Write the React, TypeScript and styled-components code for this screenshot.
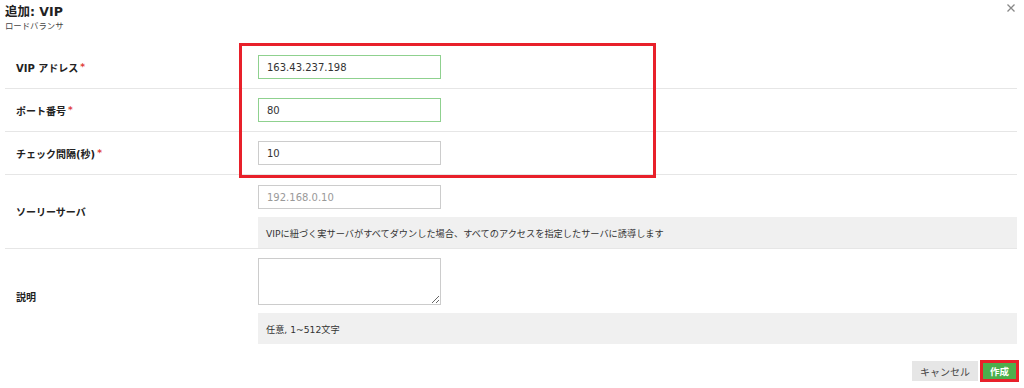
import React from "react";
import styled, { createGlobalStyle } from "styled-components";

const Global = createGlobalStyle`
  html, body { margin: 0; padding: 0; background: #fff; }
  body {
    font-family: "DejaVu Sans", "Noto Sans CJK JP", sans-serif;
    color: #333;
    width: 1024px;
    height: 388px;
    overflow: hidden;
  }
`;

const Dialog = styled.div`
  position: relative;
  width: 1024px;
  height: 388px;
  box-sizing: border-box;
  padding: 0 7px 0 5px;
`;

const Header = styled.div`
  display: flex;
  flex-direction: column;
  padding-top: 4px;
  height: 46px;
  box-sizing: border-box;
`;

const Title = styled.div`
  font-size: 12.5px;
  font-weight: bold;
  line-height: 16px;
  color: #222;
`;

const Subtitle = styled.div`
  font-size: 8.4px;
  line-height: 12px;
  color: #444;
`;

const Close = styled.button`
  position: absolute;
  top: 3px;
  right: 8px;
  width: 10px;
  height: 10px;
  padding: 0;
  border: 0;
  background: none;
  display: flex;
  align-items: center;
  justify-content: center;
`;

const Form = styled.div`
  display: flex;
  flex-direction: column;
`;

const Row = styled.div<{ $last?: boolean }>`
  display: grid;
  grid-template-columns: 253px 1fr;
  align-items: center;
  border-bottom: ${(p) => (p.$last ? "0" : "1px solid #e6e6e6")};
`;

const Label = styled.div`
  padding-left: 11px;
  font-size: 10px;
  font-weight: bold;
  color: #222;
`;

const Req = styled.span`
  color: #e0403a;
  font-size: 9px;
  margin-left: 2px;
  vertical-align: 2px;
`;

const Field = styled.div<{ $top?: number; $bottom?: number }>`
  display: flex;
  flex-direction: column;
  gap: 8px;
  padding-top: ${(p) => p.$top ?? 9}px;
  padding-bottom: ${(p) => p.$bottom ?? 9}px;
`;

const TextInput = styled.input<{ $valid?: boolean }>`
  width: 183px;
  height: 24px;
  box-sizing: border-box;
  border: 1px solid ${(p) => (p.$valid ? "#8fd18f" : "#cccccc")};
  padding: 0 8px;
  font-family: "DejaVu Sans", "Noto Sans CJK JP", sans-serif;
  font-size: 10px;
  color: #333;
  outline: none;
  background: #fff;
  &::placeholder { color: #999; }
`;

const TextArea = styled.textarea`
  width: 183px;
  height: 47px;
  box-sizing: border-box;
  border: 1px solid #cccccc;
  padding: 4px 8px;
  font-family: "DejaVu Sans", "Noto Sans CJK JP", sans-serif;
  font-size: 10px;
  outline: none;
  display: block;
`;

const Help = styled.div`
  background: #f0f0f0;
  height: 31px;
  display: flex;
  align-items: center;
  padding-left: 8px;
  font-size: 9.2px;
  color: #333;
`;

const Footer = styled.div`
  display: flex;
  justify-content: flex-end;
  align-items: center;
  gap: 2px;
  margin-top: 16px;
  margin-right: -2px;
`;

const Button = styled.button<{ $primary?: boolean }>`
  height: ${(p) => (p.$primary ? "16px" : "20px")};
  padding: 0 ${(p) => (p.$primary ? "7px" : "8px")};
  border: 0;
  font-family: "DejaVu Sans", "Noto Sans CJK JP", sans-serif;
  font-size: ${(p) => (p.$primary ? "9.5px" : "10px")};
  font-weight: ${(p) => (p.$primary ? "bold" : "normal")};
  background: ${(p) => (p.$primary ? "#4cae4c" : "#e6e6e6")};
  color: ${(p) => (p.$primary ? "#fff" : "#444")};
  display: flex;
  align-items: center;
`;

const Highlight = styled.div`
  border: 3px solid #e8202a;
  box-sizing: border-box;
`;

const ButtonMark = styled(Highlight)`
  display: flex;
`;

const FieldMark = styled(Highlight)`
  position: absolute;
  left: 239px;
  top: 43px;
  width: 417px;
  height: 135px;
  pointer-events: none;
`;

export default function App() {
  return (
    <>
      <Global />
      <Dialog>
        <Header>
          <Title>追加: VIP</Title>
          <Subtitle>ロードバランサ</Subtitle>
        </Header>
        <Close aria-label="close">
          <svg width="8" height="8" viewBox="0 0 8 8">
            <path d="M0.5 0.5 L7.5 7.5 M7.5 0.5 L0.5 7.5" stroke="#888" strokeWidth="1.3" />
          </svg>
        </Close>
        <Form>
          <Row>
            <Label>VIP アドレス<Req>*</Req></Label>
            <Field>
              <TextInput $valid defaultValue="163.43.237.198" />
            </Field>
          </Row>
          <Row>
            <Label>ポート番号<Req>*</Req></Label>
            <Field>
              <TextInput $valid defaultValue="80" />
            </Field>
          </Row>
          <Row>
            <Label>チェック間隔(秒)<Req>*</Req></Label>
            <Field>
              <TextInput defaultValue="10" />
            </Field>
          </Row>
          <Row>
            <Label>ソーリーサーバ</Label>
            <Field $top={10} $bottom={0}>
              <TextInput placeholder="192.168.0.10" />
              <Help>VIPに紐づく実サーバがすべてダウンした場合、すべてのアクセスを指定したサーバに誘導します</Help>
            </Field>
          </Row>
          <Row $last>
            <Label>説明</Label>
            <Field $bottom={0}>
              <TextArea />
              <Help>任意, 1~512文字</Help>
            </Field>
          </Row>
        </Form>
        <Footer>
          <Button>キャンセル</Button>
          <ButtonMark>
            <Button $primary>作成</Button>
          </ButtonMark>
        </Footer>
        <FieldMark />
      </Dialog>
    </>
  );
}
